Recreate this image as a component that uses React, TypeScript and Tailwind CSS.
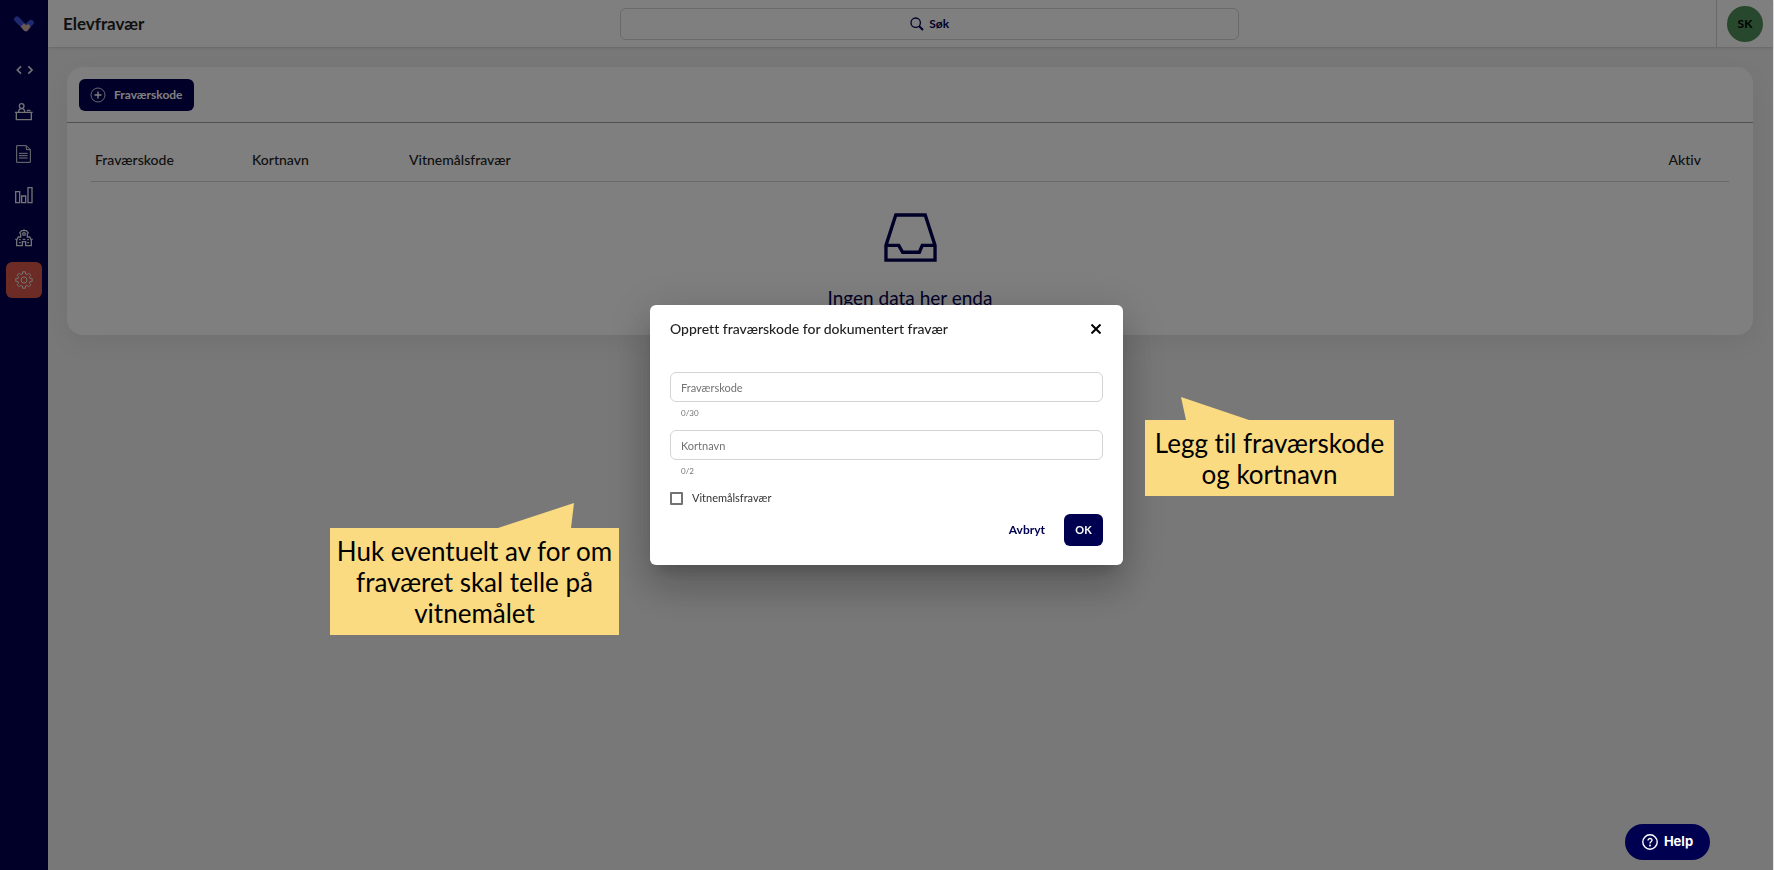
import { useState, type ReactNode } from "react";
import clsx from "clsx";

const columns = ["Fraværskode", "Kortnavn", "Vitnemålsfravær"];

function gearPath() {
  const points: string[] = [];
  for (let i = 0; i < 8; i++) {
    const teeth = [
      [-14, 19],
      [-10, 25],
      [10, 25],
      [14, 19],
    ];
    for (const [offset, radius] of teeth) {
      const angle = ((i * 45 + offset) * Math.PI) / 180;
      points.push(`${(27 + radius * Math.sin(angle)).toFixed(1)} ${(27 - radius * Math.cos(angle)).toFixed(1)}`);
    }
  }
  return `M${points.join("L")}Z`;
}

function Icon({ children, width = 3 }: { children: ReactNode; width?: number }) {
  return (
    <svg viewBox="0 0 54 54" className="size-[18px]" fill="none" stroke="currentColor" strokeWidth={width} aria-hidden="true">
      {children}
    </svg>
  );
}

const navItems = [
  {
    name: "Utvikler",
    icon: (
      <Icon width={5}>
        <path d="M18 16L7 27L18 38M40 16L51 27L40 38" />
      </Icon>
    ),
  },
  {
    name: "Skranke",
    icon: (
      <Icon width={4}>
        <path d="M0 28H53M4 28V50H49V28" />
        <circle cx="20" cy="9" r="7" />
        <path d="M11 27C11 20 15 17 20 17S29 20 29 27M36 25C38 20 44 20 46 25" />
      </Icon>
    ),
  },
  {
    name: "Dokumenter",
    icon: (
      <Icon>
        <path d="M5 2H34L46 14V52H5ZM34 2V14H46M12 25H38M12 32H38M12 39H38" />
      </Icon>
    ),
  },
  {
    name: "Statistikk",
    icon: (
      <Icon width={4}>
        <path d="M2 14H14V47H2ZM20 27H32V47H20ZM39 2H51V47H39Z" />
      </Icon>
    ),
  },
  {
    name: "Skole",
    icon: (
      <Icon width={4}>
        <path d="M5 32V50H22V38H32V50H49V32M1 31H6L10 24H17V13M53 31H48L44 24H37V13M13 13L20 5H34L41 13M27 5V1" />
        <path d="M12 32H17M23 31H31M37 32H42M12 41H17M37 41H42" />
        <circle cx="27" cy="15" r="4" />
      </Icon>
    ),
  },
  {
    name: "Innstillinger",
    active: true,
    icon: (
      <Icon>
        <path d={gearPath()} strokeLinejoin="round" />
        <circle cx="27" cy="27" r="9" />
      </Icon>
    ),
  },
];

function Sidebar() {
  return (
    <aside className="flex w-12 shrink-0 flex-col items-center bg-[#000050]">
      <a href="#" aria-label="Hjem" className="flex h-12 items-center justify-center">
        <svg viewBox="0 0 60 48" className="w-5" fill="none" strokeLinecap="round" aria-hidden="true">
          <path d="M9 10L25 26" stroke="#3c50dc" strokeWidth="17" />
          <path d="M51 20L42 28" stroke="#3c50dc" strokeWidth="17" />
          <path d="M20 32L30 22L36 28L44 24L50 33L40 45Q34 49 28 42Z" fill="#d4b0a6" />
        </svg>
      </a>
      <nav className="flex flex-col gap-[6px] pt-1">
        {navItems.map((item) => (
          <a
            key={item.name}
            href="#"
            aria-label={item.name}
            className={clsx(
              "flex size-9 items-center justify-center rounded-md text-gray-200",
              item.active && "bg-[#d9574a]"
            )}
          >
            {item.icon}
          </a>
        ))}
      </nav>
    </aside>
  );
}

function Header() {
  return (
    <header className="grid h-[47px] grid-cols-[12fr_13fr_10fr_57px] items-center bg-white shadow-sm">
      <h1 className="pl-[15px] text-[17px] font-bold text-[#222222]">Elevfravær</h1>
      <button className="flex h-8 items-center justify-center gap-[5px] rounded-md border border-neutral-300 text-xs font-bold text-[#000050]">
        <svg viewBox="0 0 14 14" className="size-[14px]" fill="none" stroke="currentColor" aria-hidden="true">
          <circle cx="5.7" cy="5.7" r="4.7" strokeWidth="1.3" />
          <path d="M9.2 9.2L13 13" strokeWidth="2" />
        </svg>
        Søk
      </button>
      <span />
      <div className="flex h-full items-center justify-center border-l border-neutral-300">
        <button className="size-9 rounded-full bg-[#50905a] text-xs font-bold text-black">SK</button>
      </div>
    </header>
  );
}

function AbsenceCard() {
  return (
    <section className="my-5 mr-5 ml-[19px] h-[268px] rounded-2xl bg-white shadow-[0_8px_24px_rgb(0_0_0/0.06)]">
      <div className="flex h-14 items-center border-b border-neutral-400 px-3">
        <button className="flex h-8 items-center gap-2 rounded-md bg-[#000050] px-[11px] text-xs font-bold text-white">
          <svg viewBox="0 0 16 16" className="size-4" fill="none" stroke="currentColor" aria-hidden="true">
            <circle cx="8" cy="8" r="7" strokeWidth="0.8" />
            <path d="M8 4.5V11.5M4.5 8H11.5" strokeWidth="1.4" />
          </svg>
          Fraværskode
        </button>
      </div>
      <div className="px-6 pt-4">
        <table className="w-full table-fixed border-b border-neutral-300 text-sm text-[#222222]">
          <thead>
            <tr className="h-[42px] text-left">
              {columns.map((column) => (
                <th key={column} className="w-[157px] px-1 font-medium">
                  {column}
                </th>
              ))}
              <th className="pr-7 text-right font-medium">Aktiv</th>
            </tr>
          </thead>
        </table>
        <div className="flex flex-col items-center gap-5 pt-[31px] text-[#000050]">
          <svg viewBox="0 0 54 50" className="w-[53px]" fill="none" stroke="currentColor" strokeWidth="3.4" aria-hidden="true">
            <path d="M2 33L12 2H42L52 33V48H2ZM2 33H15L19 40H36L39 33H52" />
          </svg>
          <p className="text-[19px] leading-8">Ingen data her enda</p>
        </div>
      </div>
    </section>
  );
}

function Field({ id, label, max }: { id: string; label: string; max: number }) {
  const [value, setValue] = useState("");

  return (
    <div>
      <input
        id={id}
        aria-label={label}
        value={value}
        maxLength={max}
        placeholder={label}
        onChange={(e) => setValue(e.target.value)}
        className="h-[30px] w-full rounded-md border border-neutral-300 px-[10px] text-[11px] text-neutral-800 outline-none placeholder:text-neutral-500"
      />
      <p className="px-[11px] pt-[3px] text-[8px] leading-4 text-neutral-500">
        {value.length}/{max}
      </p>
    </div>
  );
}

function CreateDialog() {
  return (
    <div
      role="dialog"
      aria-labelledby="dialog-title"
      className="relative w-[473px] rounded-md bg-white px-5 pt-3 pb-[19px] shadow-[0_11px_15px_-7px_rgb(0_0_0/0.2),0_24px_38px_3px_rgb(0_0_0/0.14),0_9px_46px_8px_rgb(0_0_0/0.12)]"
    >
      <div className="flex h-6 items-center justify-between">
        <h2 id="dialog-title" className="text-sm font-medium text-[#222222]">
          Opprett fraværskode for dokumentert fravær
        </h2>
        <button aria-label="Lukk" className="p-[2px] text-black">
          <svg viewBox="0 0 10 10" className="size-[10px]" stroke="currentColor" strokeWidth="2" aria-hidden="true">
            <path d="M0.5 0.5L9.5 9.5M9.5 0.5L0.5 9.5" />
          </svg>
        </button>
      </div>
      <div className="flex flex-col gap-[9px] pt-[31px]">
        <Field id="code" label="Fraværskode" max={30} />
        <Field id="short-name" label="Kortnavn" max={2} />
        <label className="flex items-center gap-[9px] text-[11px] leading-5 text-[#333333]">
          <input type="checkbox" className="size-[13px] appearance-none rounded-[1px] border-2 border-neutral-500 checked:bg-[#000050]" />
          Vitnemålsfravær
        </label>
      </div>
      <div className="flex items-center justify-end gap-[7px] pt-[6px] text-xs">
        <button className="h-8 px-3 font-bold text-[#000050]">Avbryt</button>
        <button className="h-8 w-[39px] rounded-md bg-[#000050] text-[11px] font-bold text-white">OK</button>
      </div>

      <div className="absolute top-[223px] right-full mr-[31px] w-[289px] bg-[#fadb82] pt-2 pb-[6px] text-center text-[26px] leading-[31px] text-black">
        <svg viewBox="0 0 76 25" className="absolute right-[45px] bottom-full h-[25px] w-[76px]" aria-hidden="true">
          <path d="M0 25L76 0L73 25Z" fill="#fadb82" />
        </svg>
        Huk eventuelt av for om fraværet skal telle på vitnemålet
      </div>
      <div className="absolute top-[115px] left-full ml-[22px] w-[249px] bg-[#fadb82] pt-2 pb-[6px] text-center text-[26px] leading-[31px] text-black">
        <svg viewBox="0 0 68 23" className="absolute bottom-full left-9 h-[23px] w-[68px]" aria-hidden="true">
          <path d="M0 0L68 23H5Z" fill="#fadb82" />
        </svg>
        Legg til fraværskode og kortnavn
      </div>
    </div>
  );
}

export default function App() {
  return (
    <div className="flex min-h-screen border-r border-neutral-200 bg-[#f0f0f0] font-['Lato',sans-serif] [font-variant-ligatures:none]">
      <Sidebar />
      <main className="min-w-0 flex-1">
        <Header />
        <AbsenceCard />
      </main>

      <div className="fixed inset-y-0 right-px left-0 flex items-center justify-center bg-black/50">
        <CreateDialog />
      </div>

      <button className="fixed right-16 bottom-[10px] flex h-9 w-[85px] items-center justify-center gap-[6px] rounded-full bg-[#000050] font-['Inter',sans-serif] text-[13px] font-bold text-white">
        <svg viewBox="0 0 16 16" className="size-4" fill="none" stroke="currentColor" strokeWidth="1.4" aria-hidden="true">
          <circle cx="8" cy="8" r="7.2" />
          <path d="M6 6.5C6 3.8 10.3 4 10 6.5C9.8 7.8 8 7.8 8 9.4" />
          <circle cx="8" cy="11.5" r="0.4" />
        </svg>
        Help
      </button>
    </div>
  );
}
